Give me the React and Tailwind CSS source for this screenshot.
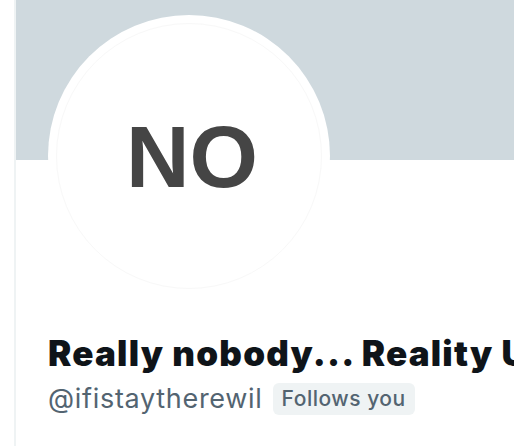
export default function App() {
  return (
    <div className="w-[514px] h-[446px] overflow-hidden bg-white font-['Inter',sans-serif]">
      <div className="ml-[14px] h-full border-l-2 border-[#eff3f4]">
        <div className="h-[160px] bg-[#cfd9de]" />
        <div className="ml-[32px] -mt-[145px] w-[282px] h-[282px] rounded-full bg-white p-[8px]">
          <div className="w-full h-full rounded-full border border-[#f8f8f8] flex items-center justify-center">
            <span className="font-['Liberation_Sans',Arial,sans-serif] font-bold text-[88px] leading-none text-[#454545] ml-[6px] mt-[2px]">
              NO
            </span>
          </div>
        </div>
        <div className="pl-[32px] mt-[36px]">
          <div className="whitespace-nowrap text-[35px] leading-[40px] font-black text-[#0f1419] tracking-[1.2px]">
            Really nobody... Reality Unscripted
          </div>
          <div className="mt-[10px] flex items-center gap-[10px] whitespace-nowrap">
            <span className="text-[27px] leading-[32px] text-[#536471] tracking-[0.7px]">@ifistaytherewil</span>
            <span className="h-[32px] px-[9px] rounded-[6px] bg-[#eff3f4] text-[#536471] text-[21px] font-medium tracking-[0.5px] flex items-center">
              Follows you
            </span>
          </div>
        </div>
      </div>
    </div>
  );
}
